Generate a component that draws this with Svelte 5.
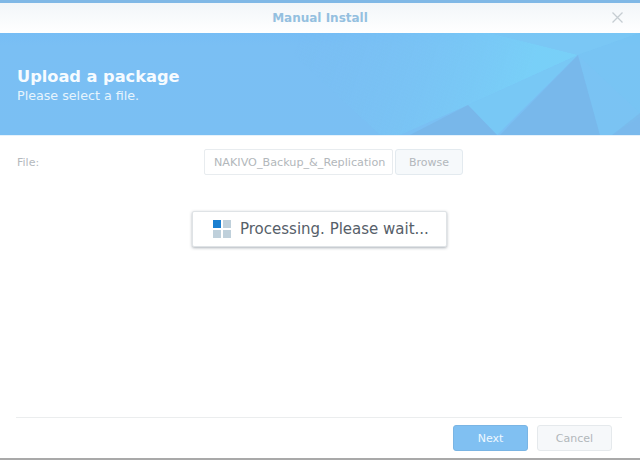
<script>
	// decorative facets of the banner, in banner coordinates (640x102)
	const facets = [
		{ points: '490,0 640,0 578,22', fill: '#7bcbf5', opacity: 0.7 },
		{ points: '270,0 490,0 578,22 468,72 400,102 380,102', fill: 'url(#glow)', opacity: 0.85 },
		{ points: '578,22 640,0 640,80', fill: '#77c8f4', opacity: 0.6 },
		{ points: '578,22 468,72 497,102', fill: '#78cdf6', opacity: 0.65 },
		{ points: '468,72 410,102 497,102', fill: '#78b4e6', opacity: 0.7 },
		{ points: '578,22 500,102 600,102', fill: '#78b6e8', opacity: 0.8 },
		{ points: '578,22 600,102 612,102 640,84 640,80', fill: '#79c6f3', opacity: 0.6 },
		{ points: '640,80 612,102 640,102', fill: '#79b6e7', opacity: 0.6 }
	];
</script>

<div class="window">
	<header class="titlebar">
		<span class="title">Manual Install</span>
		<button class="close" aria-label="Close">
			<svg width="13" height="13" viewBox="0 0 13 13">
				<path d="M1.5 1.5l10 10M11.5 1.5l-10 10" stroke="#c6cdd2" stroke-width="1.3" fill="none" />
			</svg>
		</button>
	</header>

	<section class="banner">
		<svg class="facets" width="640" height="102" viewBox="0 0 640 102" aria-hidden="true">
			<defs>
				<linearGradient id="glow" x1="300" y1="0" x2="520" y2="70" gradientUnits="userSpaceOnUse">
					<stop offset="0" stop-color="#7abff4" stop-opacity="0" />
					<stop offset="1" stop-color="#78d2f8" />
				</linearGradient>
			</defs>
			{#each facets as f}
				<polygon points={f.points} fill={f.fill} opacity={f.opacity} />
			{/each}
		</svg>
		<h1>Upload a package</h1>
		<p>Please select a file.</p>
	</section>

	<main class="content">
		<div class="row">
			<label for="file">File:</label>
			<input id="file" type="text" value="NAKIVO_Backup_&_Replication" readonly />
			<button class="browse">Browse</button>
		</div>

		<div class="toast">
			<span class="spinner">
				<i class="on"></i><i></i><i></i><i></i>
			</span>
			<span>Processing. Please wait...</span>
		</div>
	</main>

	<footer class="footer">
		<button class="btn next">Next</button>
		<button class="btn cancel">Cancel</button>
	</footer>
	<div class="edge"></div>
</div>

<style>
	:global(body) {
		background: #fff;
	}
	.window {
		width: 640px;
		height: 460px;
		display: flex;
		flex-direction: column;
		overflow: hidden;
		font-family: 'DejaVu Sans', Verdana, sans-serif;
		background: #fff;
	}
	.titlebar {
		height: 30px;
		flex: none;
		border-top: 3px solid #80b8e6;
		background: linear-gradient(#f2f6f9, #fff);
		display: flex;
		align-items: center;
		justify-content: center;
		position: relative;
	}
	.title {
		font-size: 12px;
		font-weight: bold;
		color: #94c0e0;
	}
	.close {
		position: absolute;
		right: 16px;
		top: 8px;
		padding: 0;
		border: none;
		background: none;
		line-height: 0;
	}
	.banner {
		height: 102px;
		flex: none;
		box-sizing: border-box;
		padding-top: 34px;
		padding-left: 17px;
		position: relative;
		color: #fff;
		background: linear-gradient(#76bdf5, #7abff4 12%, #7abff3);
	}
	.facets {
		position: absolute;
		left: 0;
		top: 0;
		filter: blur(0.6px);
	}
	.banner h1,
	.banner p {
		position: relative;
		margin: 0;
	}
	.banner h1 {
		font-size: 16.2px;
		line-height: 20px;
		font-weight: bold;
		color: #f6fbff;
	}
	.banner p {
		margin-top: 1px;
		font-size: 12.7px;
		line-height: 16px;
		color: #e6f4fd;
	}
	.content {
		flex: 1;
		display: flex;
		flex-direction: column;
		align-items: flex-start;
		border-top: 1px solid #e6f2fb;
	}
	.row {
		display: flex;
		align-items: center;
		margin-top: 13px;
		padding-left: 17px;
	}
	.row label {
		width: 187px;
		font-size: 11px;
		color: #b4b9bd;
	}
	.row input {
		width: 189px;
		height: 26px;
		box-sizing: border-box;
		padding: 0 4px 0 9px;
		border: 1px solid #e8ecef;
		border-radius: 2px;
		background: #fff;
		font: 11.2px/18px 'DejaVu Sans', Verdana, sans-serif;
		color: #b2b7bb;
		outline: none;
	}
	.browse {
		width: 68px;
		height: 26px;
		margin-left: 2px;
		padding: 0;
		border: 1px solid #e3eaef;
		border-radius: 3px;
		background: #f6f9fb;
		font: 11px 'DejaVu Sans', Verdana, sans-serif;
		color: #b2b7bb;
	}
	.toast {
		align-self: flex-start;
		margin: 36px 0 0 192px;
		width: 255px;
		height: 36px;
		box-sizing: border-box;
		padding-left: 20px;
		display: flex;
		align-items: center;
		gap: 9px;
		background: #fff;
		border: 1px solid #dfe3e6;
		border-radius: 2px;
		box-shadow: 0 1px 3px rgba(70, 85, 100, 0.45);
		font-size: 15px;
		color: #566069;
		white-space: nowrap;
	}
	.spinner {
		display: grid;
		grid-template-columns: 8px 8px;
		grid-auto-rows: 8px;
		gap: 2px;
	}
	.spinner i {
		background: #bfd0db;
	}
	.spinner i.on {
		background: #1a7fd0;
	}
	.footer {
		flex: none;
		height: 41px;
		box-sizing: border-box;
		margin: 0 18px 0 16px;
		border-top: 1px solid #ebedee;
		display: flex;
		justify-content: flex-end;
		align-items: flex-start;
		gap: 9px;
		padding-top: 7px;
		padding-right: 10px;
	}
	.btn {
		width: 75px;
		height: 26px;
		padding: 0;
		border-radius: 3px;
		font: 11px 'DejaVu Sans', Verdana, sans-serif;
	}
	.next {
		border: 1px solid #7ab5e4;
		background: #80c0f2;
		color: #eef8ff;
	}
	.cancel {
		border: 1px solid #e5e9ec;
		background: #f6f8fa;
		color: #b2b7bb;
	}
	.edge {
		height: 2px;
		flex: none;
		background: #a9a9a9;
	}
</style>
